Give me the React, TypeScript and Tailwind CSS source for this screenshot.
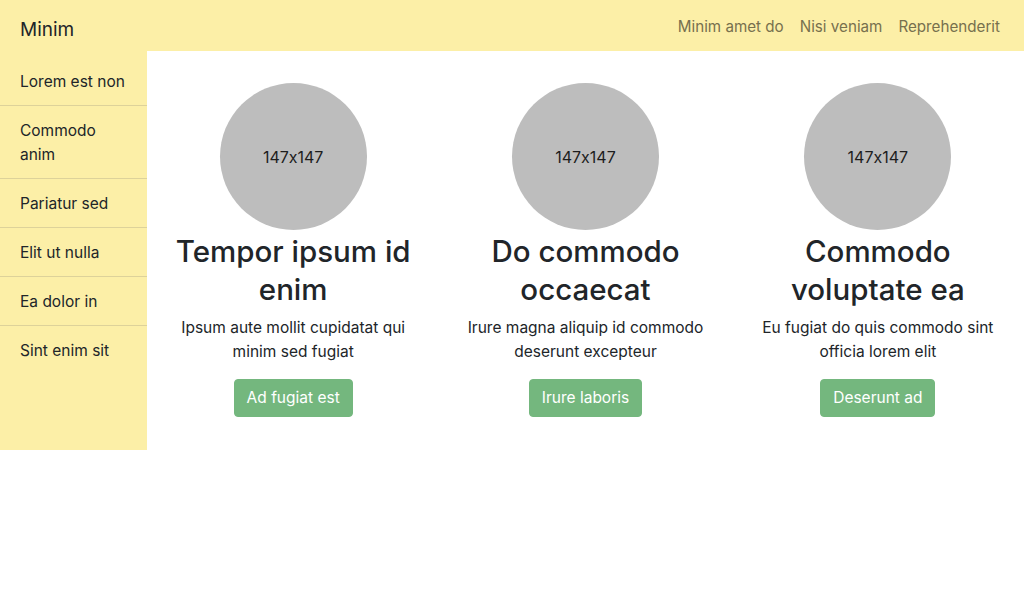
const SIDE_LINKS = ['Lorem est non', 'Commodo anim', 'Pariatur sed', 'Elit ut nulla', 'Ea dolor in', 'Sint enim sit'];

const TOP_LINKS = ['Minim amet do', 'Nisi veniam', 'Reprehenderit'];

const CARDS = [
  {
    title: 'Tempor ipsum id enim',
    text: 'Ipsum aute mollit cupidatat qui minim sed fugiat',
    action: 'Ad fugiat est',
  },
  {
    title: 'Do commodo occaecat',
    text: 'Irure magna aliquip id commodo deserunt excepteur',
    action: 'Irure laboris',
  },
  {
    title: 'Commodo voluptate ea',
    text: 'Eu fugiat do quis commodo sint officia lorem elit',
    action: 'Deserunt ad',
  },
];

function Placeholder() {
  return (
    <div className="mx-auto flex h-[147px] w-[147px] items-center justify-center rounded-full bg-[#bdbdbd] text-[16px] text-[#1d1d1d] [font-feature-settings:'calt'_0]">
      147x147
    </div>
  );
}

export default function App() {
  return (
    <div className="w-[1024px] h-[590px] bg-white text-[#212529] font-['Inter','Noto_Sans',sans-serif]">
      <div className="flex items-stretch">
        <aside className="w-[147px] shrink-0 bg-[#fcefa7]">
          <div className="h-[57px] px-5 pt-[16px] text-[19px] leading-[28px]">Minim</div>
          <ul>
            {SIDE_LINKS.map((l, i) => (
              <li
                key={i}
                className={`px-5 pt-[13px] pb-[11px] pr-4 text-[15.5px] leading-[24px] ${i > 0 ? 'border-t border-[#ddd29a]' : ''}`}
              >
                {l}
              </li>
            ))}
          </ul>
        </aside>

        <div className="flex-1 min-w-0">
          <nav className="flex h-[51px] items-center justify-end bg-[#fcefa7] pr-4 pt-[2px]">
            {TOP_LINKS.map(l => (
              <a key={l} className="px-2 text-[15.2px] leading-[24px] text-[#77704e]">
                {l}
              </a>
            ))}
          </nav>

          <main className="grid grid-cols-3 pt-8 pb-[33px]">
            {CARDS.map(c => (
              <div key={c.title} className="px-3 text-center">
                <Placeholder />
                <h2 className="mt-[2px] mb-2 px-[10px] text-[29.5px] font-medium leading-[38px]">{c.title}</h2>
                <p className="mb-[15px] px-[10px] text-[15.5px] leading-[24px]">{c.text}</p>
                <button className="rounded-[4px] border border-[#74b77e] bg-[#74b77e] px-3 py-[6px] text-[15.5px] leading-[24px] text-white">
                  {c.action}
                </button>
              </div>
            ))}
          </main>
        </div>
      </div>
    </div>
  );
}
